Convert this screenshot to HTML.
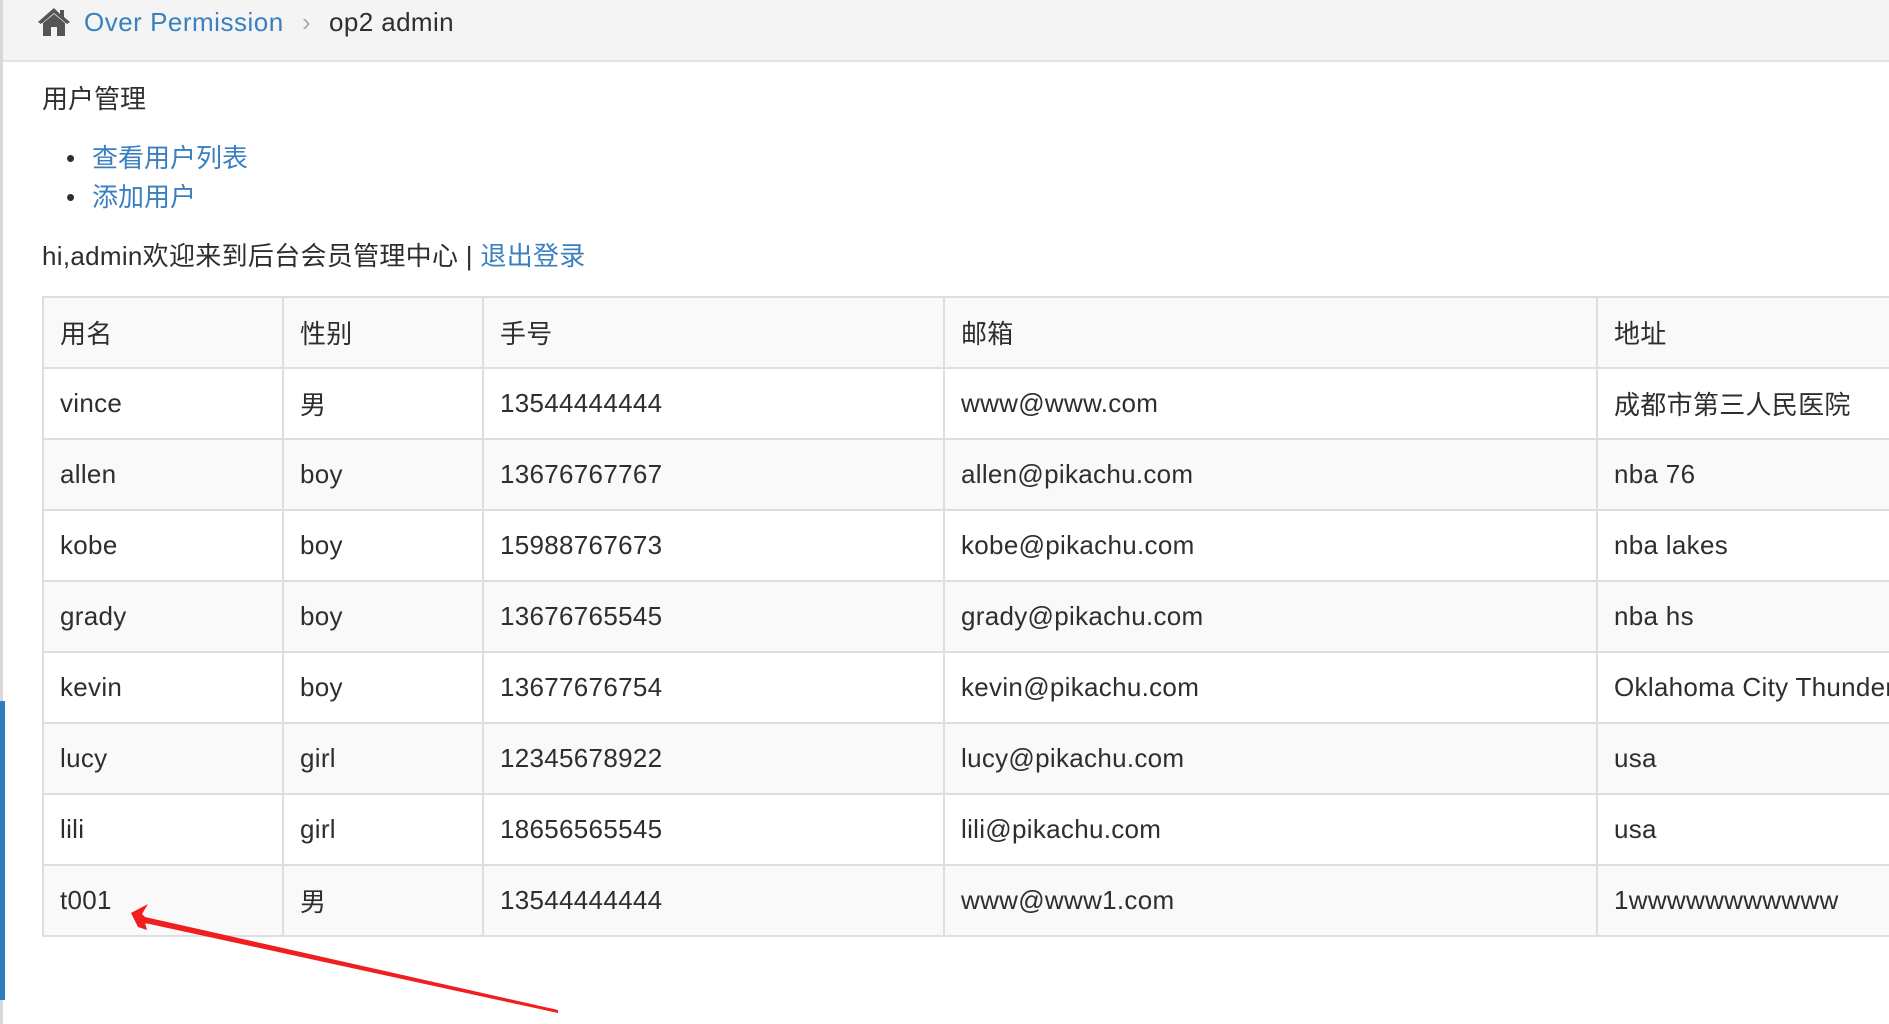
<!DOCTYPE html>
<html><head><meta charset="utf-8"><style>
*{margin:0;padding:0;box-sizing:border-box}
body{width:1889px;height:1024px;overflow:hidden;background:#fff;font-family:"Liberation Sans","Noto Sans CJK SC",sans-serif;color:#2e2e2e;position:relative}
.hdr{position:absolute;left:0;top:0;width:1889px;height:62px;background:#f4f4f4;border-bottom:2px solid #e2e2e2}
.lb{position:absolute;left:0;top:0;width:3px;height:1024px;background:#d8d8d8}
.blue{position:absolute;left:0;top:701px;width:5px;height:299px;background:#2f7ec1}
.t{position:absolute;white-space:nowrap;font-size:26px;line-height:30px}
a{color:#3a7fc0;text-decoration:none}
table{position:absolute;left:42px;top:296px;border-collapse:collapse;font-size:26px;width:2100px;letter-spacing:0.3px}
td{border:2px solid #dedede;height:71px;padding:0 16px;vertical-align:middle;white-space:nowrap}
tr:nth-child(odd) td{background:#f9f9f9}
</style></head><body>
<div class="hdr"></div>
<div class="lb"></div>
<div class="blue"></div>
<svg style="position:absolute;left:36px;top:6px" width="36" height="30" viewBox="0 0 36 30"><path d="M18 2 L2 16 L5 18 L18 7 L31 18 L34 16 L28 11 L28 4 L24 4 L24 8 Z" fill="#555"/><path d="M7 17 L18 8 L29 17 L29 30 L21 30 L21 21 L15 21 L15 30 L7 30 Z" fill="#555"/></svg>
<div class="t" style="left:84px;top:7px;letter-spacing:0.5px"><a>Over Permission</a></div>
<div class="t" style="left:302px;top:7px;color:#aaa">›</div>
<div class="t" style="left:329px;top:7px;letter-spacing:0.4px">op2 admin</div>
<div class="t" style="left:42px;top:84px">用户管理</div>
<div class="t" style="left:66px;top:143px">•</div>
<div class="t" style="left:92px;top:143px"><a>查看用户列表</a></div>
<div class="t" style="left:66px;top:182px">•</div>
<div class="t" style="left:92px;top:182px"><a>添加用户</a></div>
<div class="t" style="left:42px;top:241px;letter-spacing:0.3px">hi,admin欢迎来到后台会员管理中心 | <a>退出登录</a></div>
<table>
<colgroup><col style="width:240px"><col style="width:200px"><col style="width:461px"><col style="width:653px"><col></colgroup>
<tr><td>用名</td><td>性别</td><td>手号</td><td>邮箱</td><td>地址</td></tr>
<tr><td>vince</td><td>男</td><td>13544444444</td><td>www@www.com</td><td>成都市第三人民医院</td></tr>
<tr><td>allen</td><td>boy</td><td>13676767767</td><td>allen@pikachu.com</td><td>nba 76</td></tr>
<tr><td>kobe</td><td>boy</td><td>15988767673</td><td>kobe@pikachu.com</td><td>nba lakes</td></tr>
<tr><td>grady</td><td>boy</td><td>13676765545</td><td>grady@pikachu.com</td><td>nba hs</td></tr>
<tr><td>kevin</td><td>boy</td><td>13677676754</td><td>kevin@pikachu.com</td><td>Oklahoma City Thunder</td></tr>
<tr><td>lucy</td><td>girl</td><td>12345678922</td><td>lucy@pikachu.com</td><td>usa</td></tr>
<tr><td>lili</td><td>girl</td><td>18656565545</td><td>lili@pikachu.com</td><td>usa</td></tr>
<tr><td>t001</td><td>男</td><td>13544444444</td><td>www@www1.com</td><td>1wwwwwwwwwww</td></tr>
</table>
<svg style="position:absolute;left:0;top:0" width="1889" height="1024"><polygon points="558,1013 145,923 147,930 138,927 131,913 146,907 141,914 145,917 558,1010" fill="#f01e1e"/><polygon points="131,913 148,904 142,914 151,923 141,924" fill="#f01e1e"/></svg>
</body></html>
